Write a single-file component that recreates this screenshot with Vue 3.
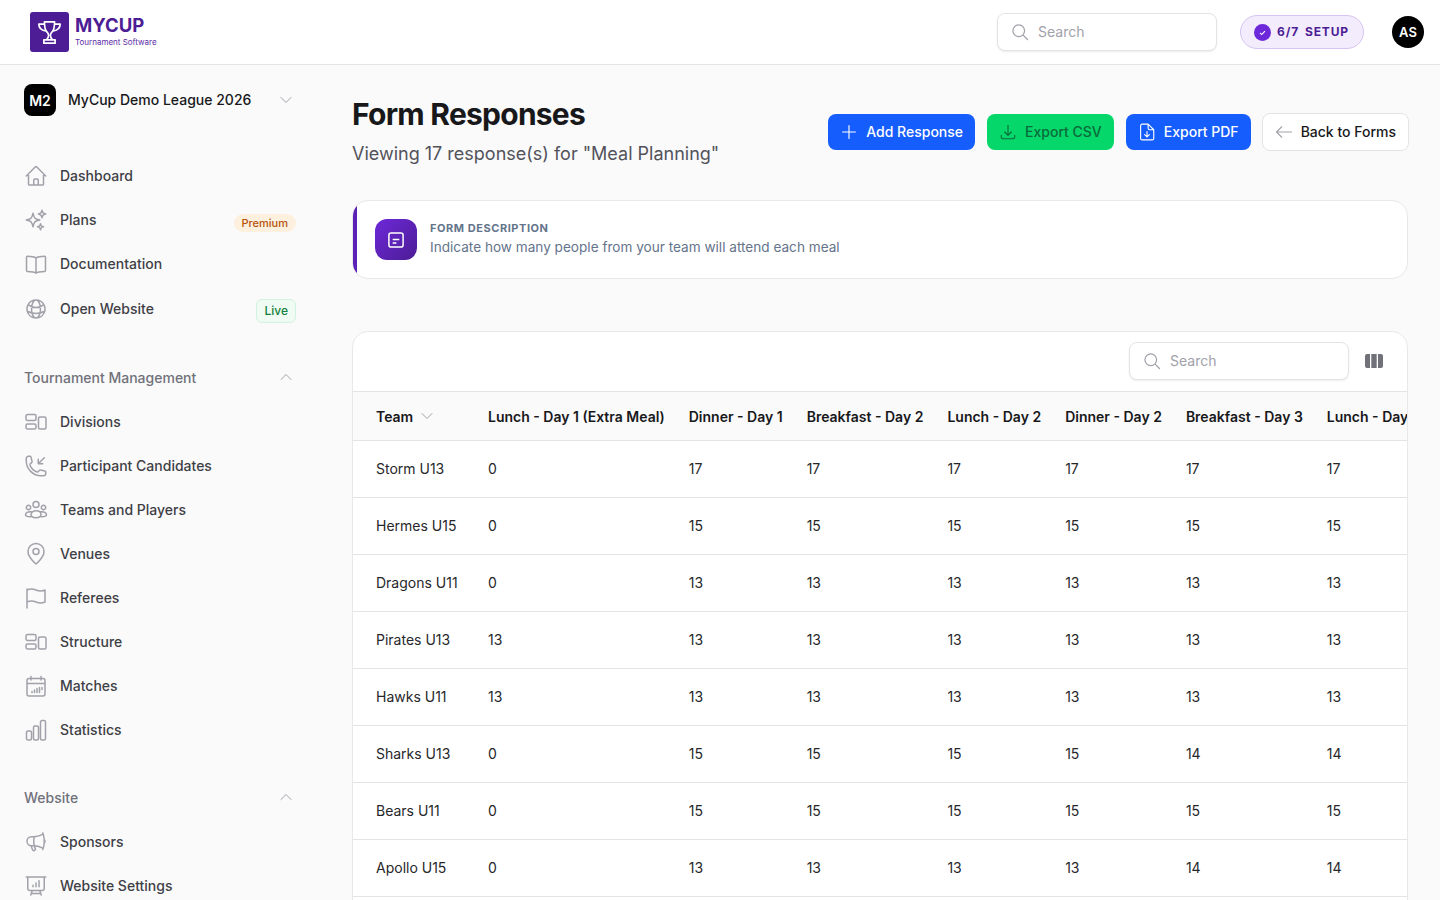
<script setup>
const circle = (x, y, r) => `M${x - r} ${y}a${r} ${r} 0 1 0 ${r * 2} 0a${r} ${r} 0 1 0 ${-r * 2} 0z`

const icons = {
  home: 'M2.25 12l8.954-8.955c.44-.439 1.152-.439 1.591 0L21.75 12M4.5 9.75v10.125c0 .621.504 1.125 1.125 1.125H9.75v-4.875c0-.621.504-1.125 1.125-1.125h2.25c.621 0 1.125.504 1.125 1.125V21h4.125c.621 0 1.125-.504 1.125-1.125V9.75M8.25 21h8.25',
  sparkles: 'M9.813 15.904L9 18.75l-.813-2.846a4.5 4.5 0 00-3.09-3.09L2.25 12l2.846-.813a4.5 4.5 0 003.09-3.09L9 5.25l.813 2.846a4.5 4.5 0 003.09 3.09L15.75 12l-2.846.813a4.5 4.5 0 00-3.09 3.09zM18.259 8.715L18 9.75l-.259-1.035a3.375 3.375 0 00-2.455-2.456L14.25 6l1.036-.259a3.375 3.375 0 002.455-2.456L18 2.25l.259 1.035a3.375 3.375 0 002.456 2.456L21.75 6l-1.035.259a3.375 3.375 0 00-2.456 2.456zM16.894 20.567L16.5 21.75l-.394-1.183a2.25 2.25 0 00-1.423-1.423L13.5 18.75l1.183-.394a2.25 2.25 0 001.423-1.423l.394-1.183.394 1.183a2.25 2.25 0 001.423 1.423l1.183.394-1.183.394a2.25 2.25 0 00-1.423 1.423z',
  book: 'M12 6C10.5 4.8 8 4.2 3.5 4.2c-.6 0-1 .4-1 1V18.5c0 .6.4 1 1 1C8 19.5 10.5 20 12 21.2c1.5-1.2 4-1.7 8.5-1.7.6 0 1-.4 1-1V5.2c0-.6-.4-1-1-1C16 4.2 13.5 4.8 12 6zM12 6V21.2',
  globe: 'M12 21a9.004 9.004 0 008.716-6.747M12 21a9.004 9.004 0 01-8.716-6.747M12 21c2.485 0 4.5-4.03 4.5-9S14.485 3 12 3m0 18c-2.485 0-4.5-4.03-4.5-9S9.515 3 12 3m0 0a8.997 8.997 0 017.843 4.582M12 3a8.997 8.997 0 00-7.843 4.582m15.686 0A11.953 11.953 0 0112 10.5c-2.998 0-5.74-1.1-7.843-2.918m15.686 0A8.959 8.959 0 0121 12c0 .778-.099 1.533-.284 2.253m0 0A17.919 17.919 0 0112 16.5c-3.162 0-6.133-.815-8.716-2.247m0 0A9.015 9.015 0 013 12c0-1.605.42-3.113 1.157-4.418',
  blocks: 'M3.5 4.5h7c.8 0 1.5.7 1.5 1.5v3c0 .8-.7 1.5-1.5 1.5h-7C2.7 10.5 2 9.8 2 9V6c0-.8.7-1.5 1.5-1.5zM3.5 14h7c.8 0 1.5.7 1.5 1.5v2c0 .8-.7 1.5-1.5 1.5h-7C2.7 19 2 18.3 2 17.5v-2c0-.8.7-1.5 1.5-1.5zM16 7h4.5c.8 0 1.5.7 1.5 1.5v9c0 .8-.7 1.5-1.5 1.5H16c-.8 0-1.5-.7-1.5-1.5v-9C14.5 7.7 15.2 7 16 7z',
  phone: 'M14.25 9.75v-4.5m0 4.5h4.5m-4.5 0l6-6m-3 18c-8.284 0-15-6.716-15-15V4.5A2.25 2.25 0 014.5 2.25h1.372c.516 0 .966.351 1.091.852l1.106 4.423c.11.44-.054.902-.417 1.173l-1.293.97a1.062 1.062 0 00-.38 1.21 12.035 12.035 0 007.143 7.143c.441.162.928-.004 1.21-.38l.97-1.293a1.125 1.125 0 011.173-.417l4.423 1.106c.5.125.852.575.852 1.091V19.5a2.25 2.25 0 01-2.25 2.25h-2.25z',
  team: `${circle(12, 6.5, 3)}${circle(4.5, 9.5, 2.2)}${circle(19.5, 9.5, 2.2)}M7 16.5c0-2.3 2.2-3.7 5-3.7s5 1.4 5 3.7c0 2-2.2 3.2-5 3.2s-5-1.2-5-3.2zM7.3 13.7C4 13.4 1.5 14.8 1.5 16.8c0 1.2 1.8 2 5 2M16.7 13.7c3.3-.3 5.8 1.1 5.8 3.1 0 1.2-1.8 2-5 2`,
  pin: `M12 22s-8-6.5-8-12.5a8 8 0 0116 0C20 15.5 12 22 12 22z${circle(12, 9.5, 3)}`,
  flag: 'M3 22V3M3 4c3-1.2 6-1.2 9 0s6 1.2 9 0v12c-3 1.2-6 1.2-9 0s-6-1.2-9 0',
  calendar: 'M5 4.5h14c1.1 0 2 .9 2 2V20c0 1.1-.9 2-2 2H5c-1.1 0-2-.9-2-2V6.5c0-1.1.9-2 2-2zM3 9.5h18M7 2.5V6M17 2.5V6M8 17.5v1M10.5 16v2.5M13 14.5v4M15.5 13.5v5M18 13.5v2',
  stats: 'M4 13h2c.8 0 1.5.7 1.5 1.5v6c0 .8-.7 1.5-1.5 1.5H4c-.8 0-1.5-.7-1.5-1.5v-6C2.5 13.7 3.2 13 4 13zM11 8h2c.8 0 1.5.7 1.5 1.5v11c0 .8-.7 1.5-1.5 1.5h-2c-.8 0-1.5-.7-1.5-1.5v-11C9.5 8.7 10.2 8 11 8zM18 2.5h2c.8 0 1.5.7 1.5 1.5v16.500c0 .8-.7 1.500-1.500 1.500h-2c-.8 0-1.500-.7-1.500-1.500V4c0-.8.7-1.500 1.500-1.500z',
  megaphone: 'M10.34 15.84c-.688-.06-1.386-.09-2.09-.09H7.5a4.5 4.5 0 110-9h.75c.704 0 1.402-.03 2.09-.09m0 9.18c.253.962.584 1.892.985 2.783.247.55.06 1.21-.463 1.511l-.657.38c-.551.318-1.26.117-1.527-.461a20.845 20.845 0 01-1.44-4.282m3.102.069a18.03 18.03 0 01-.59-4.59c0-1.586.205-3.124.59-4.59m0 9.18a23.848 23.848 0 018.835 2.535M10.34 6.66a23.847 23.847 0 008.835-2.535m0 0A23.74 23.74 0 0018.795 3m.38 1.125a23.91 23.91 0 011.014 5.395m-1.014 8.855c-.118.38-.245.754-.38 1.125m.38-1.125a23.91 23.91 0 001.014-5.395m0-3.46c.495.413.811 1.035.811 1.73 0 .695-.316 1.317-.811 1.73m0-3.46a24.347 24.347 0 010 3.46',
  board: 'M3.75 3v11.25A2.25 2.25 0 006 16.5h2.25M3.75 3h-1.5m1.5 0h16.5m0 0h1.5m-1.5 0v11.25A2.25 2.25 0 0118 16.5h-2.25m-7.5 0h7.5m-7.5 0l-1 3m8.5-3l1 3m0 0l.5 1.5m-.5-1.5h-9.5m0 0l-.5 1.5M9 11.25v1.5M12 9v3.75m3-6v6',
  search: 'M21 21l-5.2-5.2M17.5 10.5a7 7 0 11-14 0 7 7 0 0114 0z',
  chevronDown: 'M19.5 8.25l-7.5 7.5-7.5-7.5',
  chevronUp: 'M4.5 15.75l7.5-7.5 7.5 7.5',
  plus: 'M12 3.5v17M3.5 12h17',
  download: 'M3 16.5v2.25A2.25 2.25 0 005.25 21h13.5A2.25 2.25 0 0021 18.75V16.5M16.5 12L12 16.5m0 0L7.5 12m4.5 4.5V3',
  filePdf: 'M5.5 1.5h8L21 9v11.5a2 2 0 0 1-2 2H5.5a2 2 0 0 1-2-2v-17a2 2 0 0 1 2-2zM13.5 1.5V7c0 1.1.9 2 2 2H21M12 11.5v7M8.8 15.5L12 18.5l3.2-3',
  arrowLeft: 'M9 5l-7 7 7 7M2 12h20',
  check: 'M8.5 12.5l2.4 2.4L15.5 10',
  note: 'M6 3.5h12c1.4 0 2.5 1.1 2.5 2.5v12c0 1.4-1.1 2.5-2.5 2.5H6c-1.4 0-2.5-1.1-2.5-2.5V6c0-1.4 1.1-2.5 2.5-2.5zM8 11.5h8M8 15.5h4.5',
  trophy: 'M7.5 2.5h9c0 4.5-.6 7.5-2.2 9-.9.9-1.5 1.5-1.5 3 0 1.8.7 3 1.900 4H9.300c1.200-1 1.900-2.200 1.900-4 0-1.500-.6-2.100-1.500-3C8.100 10 7.500 7 7.500 2.500zM7.500 4.500H2.500c0 3.200 1.800 5.500 6 6.200M16.500 4.500h5c0 3.200-1.800 5.500-6 6.200M7 21.500h10v-3H7z'
}

const topNav = [
  { label: 'Dashboard', icon: 'home' },
  { label: 'Plans', icon: 'sparkles', badge: 'Premium', badgeClass: 'premium' },
  { label: 'Documentation', icon: 'book' },
  { label: 'Open Website', icon: 'globe', badge: 'Live', badgeClass: 'live' }
]

const sections = [
  {
    title: 'Tournament Management',
    items: [
      { label: 'Divisions', icon: 'blocks' },
      { label: 'Participant Candidates', icon: 'phone' },
      { label: 'Teams and Players', icon: 'team' },
      { label: 'Venues', icon: 'pin' },
      { label: 'Referees', icon: 'flag' },
      { label: 'Structure', icon: 'blocks' },
      { label: 'Matches', icon: 'calendar' },
      { label: 'Statistics', icon: 'stats' }
    ]
  },
  {
    title: 'Website',
    items: [
      { label: 'Sponsors', icon: 'megaphone' },
      { label: 'Website Settings', icon: 'board' }
    ]
  }
]

const columns = [
  'Lunch - Day 1 (Extra Meal)',
  'Dinner - Day 1',
  'Breakfast - Day 2',
  'Lunch - Day 2',
  'Dinner - Day 2',
  'Breakfast - Day 3',
  'Lunch - Day 3'
]

const rows = [
  { team: 'Storm U13', values: [0, 17, 17, 17, 17, 17, 17] },
  { team: 'Hermes U15', values: [0, 15, 15, 15, 15, 15, 15] },
  { team: 'Dragons U11', values: [0, 13, 13, 13, 13, 13, 13] },
  { team: 'Pirates U13', values: [13, 13, 13, 13, 13, 13, 13] },
  { team: 'Hawks U11', values: [13, 13, 13, 13, 13, 13, 13] },
  { team: 'Sharks U13', values: [0, 15, 15, 15, 15, 14, 14] },
  { team: 'Bears U11', values: [0, 15, 15, 15, 15, 15, 15] },
  { team: 'Apollo U15', values: [0, 13, 13, 13, 13, 14, 14] }
]
</script>

<template>
  <div class="app">
    <header class="topbar">
      <div class="brand">
        <div class="brand-mark">
          <svg viewBox="0 0 24 24" class="trophy"><path :d="icons.trophy" /></svg>
        </div>
        <div class="brand-text">
          <div class="brand-name">MYCUP</div>
          <div class="brand-sub">Tournament Software</div>
        </div>
      </div>
      <div class="topbar-right">
        <div class="search top-search">
          <svg viewBox="0 0 24 24" class="ico search-ico"><path :d="icons.search" /></svg>
          <span class="txt">Search</span>
        </div>
        <div class="setup">
          <span class="setup-check">
            <svg viewBox="0 0 24 24"><path :d="icons.check" /></svg>
          </span>
          <span class="setup-text txt">6/7</span>
          <span class="setup-text txt">SETUP</span>
        </div>
        <div class="avatar">AS</div>
      </div>
    </header>

    <div class="body">
      <aside class="sidebar">
        <div class="league">
          <div class="league-badge">M2</div>
          <div class="league-name txt">MyCup Demo League 2026</div>
          <svg viewBox="0 0 24 24" class="ico chevron"><path :d="icons.chevronDown" /></svg>
        </div>

        <nav class="nav top-nav">
          <div v-for="item in topNav" :key="item.label" class="nav-item">
            <svg viewBox="0 0 24 24" class="ico nav-ico"><path :d="icons[item.icon]" /></svg>
            <span class="nav-label">{{ item.label }}</span>
            <span v-if="item.badge" class="badge" :class="item.badgeClass">{{ item.badge }}</span>
          </div>
        </nav>

        <section v-for="section in sections" :key="section.title" class="nav-section">
          <div class="section-title">
            <span>{{ section.title }}</span>
            <svg viewBox="0 0 24 24" class="ico chevron"><path :d="icons.chevronUp" /></svg>
          </div>
          <nav class="nav">
            <div v-for="item in section.items" :key="item.label" class="nav-item">
              <svg viewBox="0 0 24 24" class="ico nav-ico"><path :d="icons[item.icon]" /></svg>
              <span class="nav-label">{{ item.label }}</span>
            </div>
          </nav>
        </section>
      </aside>

      <main class="content">
        <div class="page-head">
          <div class="page-title">
            <h1>Form Responses</h1>
            <p>Viewing 17 response(s) for "Meal Planning"</p>
          </div>
          <div class="actions">
            <button class="btn blue">
              <svg viewBox="0 0 24 24" class="ico btn-ico"><path :d="icons.plus" /></svg>
              <span class="txt">Add Response</span>
            </button>
            <button class="btn green">
              <svg viewBox="0 0 24 24" class="ico btn-ico"><path :d="icons.download" /></svg>
              <span class="txt">Export CSV</span>
            </button>
            <button class="btn blue">
              <svg viewBox="0 0 24 24" class="ico btn-ico"><path :d="icons.filePdf" /></svg>
              <span class="txt">Export PDF</span>
            </button>
            <button class="btn outline">
              <svg viewBox="0 0 24 24" class="ico btn-ico back-ico"><path :d="icons.arrowLeft" /></svg>
              <span class="txt">Back to Forms</span>
            </button>
          </div>
        </div>

        <div class="description">
          <div class="description-icon">
            <svg viewBox="0 0 24 24"><path :d="icons.note" /></svg>
          </div>
          <div class="description-body">
            <div class="description-title">FORM DESCRIPTION</div>
            <div class="description-text">Indicate how many people from your team will attend each meal</div>
          </div>
        </div>

        <div class="table-card">
          <div class="toolbar">
            <div class="search table-search">
              <svg viewBox="0 0 24 24" class="ico search-ico"><path :d="icons.search" /></svg>
              <span>Search</span>
            </div>
            <svg viewBox="0 0 18 14" class="columns-ico">
              <path d="M2 0h3v14H2a2 2 0 0 1-2-2V2a2 2 0 0 1 2-2zM6.3 0h5.4v14H6.3zM13 0h3a2 2 0 0 1 2 2v10a2 2 0 0 1-2 2h-3z" />
            </svg>
          </div>
          <div class="table-wrap">
            <table>
              <thead>
                <tr>
                  <th class="team-col">
                    <span class="team-head">
                      Team
                      <svg viewBox="0 0 24 24" class="ico sort-ico"><path :d="icons.chevronDown" /></svg>
                    </span>
                  </th>
                  <th v-for="col in columns" :key="col">{{ col }}</th>
                </tr>
              </thead>
              <tbody>
                <tr v-for="row in rows" :key="row.team">
                  <td class="team-col">{{ row.team }}</td>
                  <td v-for="(value, i) in row.values" :key="i">{{ value }}</td>
                </tr>
              </tbody>
            </table>
          </div>
        </div>
      </main>
    </div>
  </div>
</template>

<style>
html, body {
  margin: 0;
  background: #fafafa;
}
</style>

<style scoped>
.app {
  height: 100vh;
  display: flex;
  flex-direction: column;
  overflow: hidden;
  background: #fafafa;
  font-family: Inter, "Liberation Sans", sans-serif;
  font-size: 14px;
  color: #18181b;
}

.ico {
  fill: none;
  stroke: #a1a1aa;
  stroke-width: 1.5;
  stroke-linecap: round;
  stroke-linejoin: round;
  flex-shrink: 0;
}

/* Inter sits about 1px low here, nudge labels up */
.txt,
.nav-label {
  padding-bottom: 2px;
}

.topbar {
  height: 64px;
  flex-shrink: 0;
  display: flex;
  align-items: center;
  justify-content: space-between;
  padding: 0 16px 0 30px;
  background: #fff;
  border-bottom: 1px solid #e4e4e7;
}

.brand {
  display: flex;
  align-items: center;
  gap: 6px;
}

.brand-mark {
  width: 39px;
  height: 40px;
  border-radius: 3px;
  background: #4c1d95;
  display: flex;
  align-items: center;
  justify-content: center;
}

.trophy {
  width: 27px;
  height: 27px;
  fill: none;
  stroke: #fff;
  stroke-width: 1.5;
  stroke-linejoin: round;
}

.brand-text {
  padding-bottom: 2px;
}

.brand-name {
  font-size: 18.5px;
  line-height: 22px;
  font-weight: 700;
  color: #4c1d95;
}

.brand-sub {
  font-size: 8px;
  line-height: 12px;
  color: #5b2ba6;
}

.topbar-right {
  display: flex;
  align-items: center;
}

.search {
  box-sizing: border-box;
  width: 220px;
  height: 38px;
  display: flex;
  align-items: center;
  gap: 8px;
  padding: 0 12px;
  background: #fff;
  border: 1px solid #e4e4e7;
  border-radius: 8px;
  box-shadow: 0 1px 2px rgba(0, 0, 0, 0.08);
  color: #a1a1aa;
}

.search-ico {
  width: 20px;
  height: 20px;
}

.setup {
  box-sizing: border-box;
  height: 34px;
  width: 124px;
  margin-left: 23px;
  display: flex;
  align-items: center;
  gap: 6px;
  padding: 0 13px;
  background: #f3ecfc;
  border: 1px solid #d6c4f2;
  border-radius: 17px;
}

.setup-check {
  width: 17px;
  height: 17px;
  border-radius: 50%;
  background: #6d28d9;
  display: flex;
}

.setup-check svg {
  fill: none;
  stroke: #fff;
  stroke-width: 1.5;
}

.setup-text {
  font-size: 12px;
  font-weight: 700;
  letter-spacing: 0.07em;
  color: #4c1d95;
}

.avatar {
  width: 32px;
  height: 32px;
  margin-left: 28px;
  border-radius: 50%;
  background: #000;
  color: #fff;
  font-size: 13px;
  font-weight: 600;
  display: flex;
  align-items: center;
  justify-content: center;
}

.body {
  flex: 1;
  display: flex;
  min-height: 0;
}

.sidebar {
  width: 320px;
  flex-shrink: 0;
  box-sizing: border-box;
  padding: 19px 24px 0;
  overflow: hidden;
}

.league {
  display: flex;
  align-items: center;
  height: 32px;
}

.league-badge {
  width: 32px;
  height: 32px;
  border-radius: 8px;
  background: #000;
  color: #fff;
  font-weight: 600;
  display: flex;
  align-items: center;
  justify-content: center;
}

.league-name {
  flex: 1;
  margin-left: 12px;
  font-weight: 500;
}

.chevron {
  width: 16px;
  height: 16px;
  margin-right: 2px;
}

.top-nav {
  margin-top: 38px;
}

.nav-item {
  height: 44px;
  display: flex;
  align-items: center;
  gap: 12px;
  color: #3f3f46;
  font-weight: 500;
}

.top-nav .nav-item:last-child {
  height: 46px;
}

.nav-ico {
  width: 24px;
  height: 24px;
}

.nav-label {
  flex: 1;
}

.badge {
  font-size: 11px;
  font-weight: 500;
}

.premium {
  height: 18px;
  line-height: 18px;
  margin-top: 5px;
  padding: 0 8px;
  border-radius: 9px;
  background: #fdf0df;
  color: #b45309;
}

.live {
  box-sizing: border-box;
  height: 24px;
  line-height: 22px;
  margin-top: 4px;
  padding: 0 7px;
  font-size: 12px;
  border-radius: 6px;
  border: 1px solid #d1f2de;
  background: #effbf3;
  color: #15803d;
}

.nav-section {
  margin-top: 35px;
}

.section-title {
  display: flex;
  align-items: center;
  justify-content: space-between;
  height: 20px;
  margin-bottom: 13px;
  color: #71717a;
  font-weight: 500;
}

.content {
  flex: 1;
  min-width: 0;
  box-sizing: border-box;
  padding: 31px 32px 0;
}

.page-head {
  display: flex;
  align-items: center;
  justify-content: space-between;
}

.page-title {
  padding-bottom: 2px;
}

h1 {
  margin: 0;
  font-size: 30px;
  line-height: 36px;
  font-weight: 700;
  letter-spacing: -0.025em;
  color: #18181b;
}

.page-title p {
  margin: 10px 0 0;
  font-size: 18px;
  line-height: 24px;
  color: #52525b;
}

.actions {
  display: flex;
  align-items: center;
  gap: 12px;
  margin-right: -1px;
}

.btn {
  height: 36px;
  display: flex;
  align-items: center;
  gap: 8px;
  padding: 0 12px;
  border: 0;
  border-radius: 8px;
  font-family: inherit;
  font-size: 14px;
  font-weight: 500;
}

.btn-ico {
  width: 18px;
  height: 18px;
  stroke: currentColor;
}

.blue {
  background: #155dfc;
  color: #fff;
}

.green {
  background: #05d76b;
  color: #0b6b3a;
}

.outline {
  height: 38px;
  background: #fff;
  border: 1px solid #e4e4e7;
  color: #18181b;
  margin-left: -1px;
}

.back-ico {
  stroke: #a1a1aa;
}

.description {
  position: relative;
  overflow: hidden;
  box-sizing: border-box;
  height: 79px;
  margin-top: 32px;
  display: flex;
  align-items: center;
  gap: 13px;
  padding-left: 22px;
  background: #fff;
  border: 1px solid #e8e8eb;
  border-radius: 16px;
}

.description::before {
  content: "";
  position: absolute;
  left: 0;
  top: 0;
  bottom: 0;
  width: 4px;
  background: #5b21b6;
}

.description-icon {
  width: 42px;
  height: 41px;
  border-radius: 12px;
  background: linear-gradient(135deg, #6d28d9, #4c1d95);
  display: flex;
  align-items: center;
  justify-content: center;
}

.description-icon svg {
  width: 20px;
  height: 20px;
  fill: none;
  stroke: #fff;
  stroke-width: 1.8;
}

.description-body {
  padding-bottom: 3px;
}

.description-title {
  font-size: 11px;
  line-height: 16px;
  font-weight: 700;
  letter-spacing: 0.05em;
  color: #64748b;
}

.description-text {
  margin-top: 1px;
  font-size: 13.6px;
  line-height: 20px;
  color: #64748b;
}

.table-card {
  min-height: 640px;
  margin-top: 52px;
  background: #fff;
  border: 1px solid #e8e8eb;
  border-radius: 16px;
  overflow: hidden;
}

.toolbar {
  box-sizing: border-box;
  height: 60px;
  display: flex;
  align-items: center;
  justify-content: flex-end;
  gap: 16px;
  padding: 0 24px 2px 0;
  border-bottom: 1px solid #e4e4e7;
}

.columns-ico {
  width: 18px;
  height: 14px;
  fill: #71717a;
}

.table-wrap {
  overflow: hidden;
}

table {
  border-collapse: collapse;
  white-space: nowrap;
}

th, td {
  text-align: left;
}

th {
  height: 48px;
  padding: 0 12px;
  font-weight: 600;
  background: #fafafa;
  color: #18181b;
  border-bottom: 1px solid #e4e4e7;
}

td {
  height: 54px;
  padding: 0 12px 2px;
  color: #27272a;
  border-bottom: 1px solid #e4e4e7;
}

.team-col {
  padding-left: 23px;
  min-width: 88px;
}

.team-head {
  display: flex;
  align-items: center;
  gap: 6px;
}

.sort-ico {
  width: 16px;
  height: 16px;
}
</style>
